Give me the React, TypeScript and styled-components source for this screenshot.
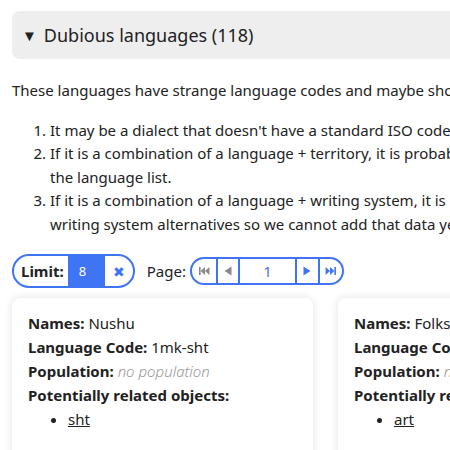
import React from "react";
import styled, { createGlobalStyle } from "styled-components";

const GlobalStyle = createGlobalStyle`
  body {
    margin: 0;
    font-family: "Noto Sans", Lato, sans-serif;
    color: #222;
    background: #fff;
    overflow: hidden;
  }
`;

const Page = styled.div`
  width: 900px;
  padding: 11px 12px;
`;

const Details = styled.div`
  background-color: #eeeeee;
  border-radius: 8px;
  height: 48px;
  display: flex;
  align-items: center;
  padding: 0 10px;
  font-size: 18px;
  gap: 7px;
`;

const Caret = styled.span`
  font-size: 15px;
`;

const Intro = styled.p`
  margin: 20px 0 16px;
  font-size: 15px;
  line-height: 23.5px;
  white-space: nowrap;
`;

const Steps = styled.ol`
  margin: 0;
  padding-left: 38px;
  font-size: 15px;
  line-height: 23.6px;
  width: 586px;
`;

const Controls = styled.div`
  display: flex;
  align-items: center;
  gap: 10px;
  margin-top: 18px;
`;

const Pill = styled.div<{ $height: number }>`
  display: flex;
  align-items: stretch;
  height: ${(p) => p.$height}px;
  border: 2px solid #3f74f5;
  border-radius: ${(p) => p.$height / 2}px;
  overflow: hidden;
  box-sizing: border-box;
`;

const PillLabel = styled.span`
  display: flex;
  align-items: center;
  padding: 0 4px 0 7px;
  font-weight: 700;
  font-size: 15px;
`;

const LimitValue = styled.span`
  width: 37px;
  background: #3f74f5;
  color: #fff;
  display: flex;
  align-items: center;
  padding-left: 11px;
  box-sizing: border-box;
  font-size: 13px;
`;

const Clear = styled.span`
  width: 28px;
  display: flex;
  align-items: center;
  justify-content: center;
  color: #3f74f5;
  font-size: 14px;
`;

const Label = styled.span`
  font-size: 15px;
  margin-left: 2px;
  margin-right: -6px;
`;

const PageButton = styled.span<{ $disabled?: boolean; $first?: boolean; $width: number }>`
  width: ${(p) => p.$width}px;
  display: flex;
  align-items: center;
  justify-content: center;
  color: ${(p) => (p.$disabled ? "#8a8a8a" : "#3f74f5")};
  border-left: ${(p) => (p.$first ? "none" : "2px solid #3f74f5")};
  box-sizing: border-box;
`;

const PageInput = styled.span`
  width: 57px;
  border-left: 2px solid #3f74f5;
  display: flex;
  align-items: center;
  justify-content: center;
  color: #3f74f5;
  font-size: 15px;
  box-sizing: border-box;
`;

const Cards = styled.div`
  display: flex;
  gap: 25px;
  margin-top: 10px;
`;

const Card = styled.div`
  width: 301px;
  background: #fff;
  border-radius: 8px;
  box-shadow: 0 0 8px rgba(0, 0, 0, 0.12);
  padding: 14px 16px;
  box-sizing: border-box;
  font-size: 15px;
  line-height: 23.8px;
  height: 200px;
`;

const Field = styled.div``;

const Key = styled.b`
  font-weight: 700;
`;

const Empty = styled.i`
  color: #999;
  font-weight: 300;
`;

const Related = styled.ul`
  margin: 0;
  padding-left: 40px;
`;

const Link = styled.a`
  color: #222;
  text-decoration: underline;
`;

function Icon({ d }: { d: string }) {
  return (
    <svg width="12" height="10" viewBox="0 0 12 10" fill="currentColor">
      <path d={d} />
    </svg>
  );
}

const languages = [
  { name: "Nushu", code: "1mk-sht", related: "sht" },
  { name: "Folkspraak", code: "art-x-folkspraak", related: "art" },
];

export default function App() {
  return (
    <>
      <GlobalStyle />
      <Page>
        <Details>
          <Caret>▼</Caret>
          <span>Dubious languages (118)</span>
        </Details>
        <Intro>
          These languages have strange language codes and maybe should be
          reviewed.
        </Intro>
        <Steps>
          <li>It may be a dialect that doesn't have a standard ISO code yet.</li>
          <li>
            If it is a combination of a language + territory, it is probably
            better represented in the language list.
          </li>
          <li>
            If it is a combination of a language + writing system, it is
            probably lacking data on writing system alternatives so we cannot
            add that data yet.
          </li>
        </Steps>
        <Controls>
          <Pill $height={34}>
            <PillLabel>Limit:</PillLabel>
            <LimitValue>8</LimitValue>
            <Clear>✖</Clear>
          </Pill>
          <Label>Page:</Label>
          <Pill $height={28}>
            <PageButton $first $disabled $width={24}>
              <Icon d="M1 1h1.6v8H1zM7 1v8L2.6 5zM11.4 1v8L7 5z" />
            </PageButton>
            <PageButton $disabled $width={22}>
              <Icon d="M9.5 0.5v9L2.5 5z" />
            </PageButton>
            <PageInput>1</PageInput>
            <PageButton $width={23}>
              <Icon d="M2.5 0.5v9L9.5 5z" />
            </PageButton>
            <PageButton $width={24}>
              <Icon d="M0.6 1v8L5 5zM5 1v8L9.4 5zM9.4 1h1.6v8H9.4z" />
            </PageButton>
          </Pill>
        </Controls>
        <Cards>
          {languages.map((l) => (
            <Card key={l.code}>
              <Field>
                <Key>Names:</Key> {l.name}
              </Field>
              <Field>
                <Key>Language Code:</Key> {l.code}
              </Field>
              <Field>
                <Key>Population:</Key> <Empty>no population</Empty>
              </Field>
              <Field>
                <Key>Potentially related objects:</Key>
              </Field>
              <Related>
                <li>
                  <Link>{l.related}</Link>
                </li>
              </Related>
            </Card>
          ))}
        </Cards>
      </Page>
    </>
  );
}
